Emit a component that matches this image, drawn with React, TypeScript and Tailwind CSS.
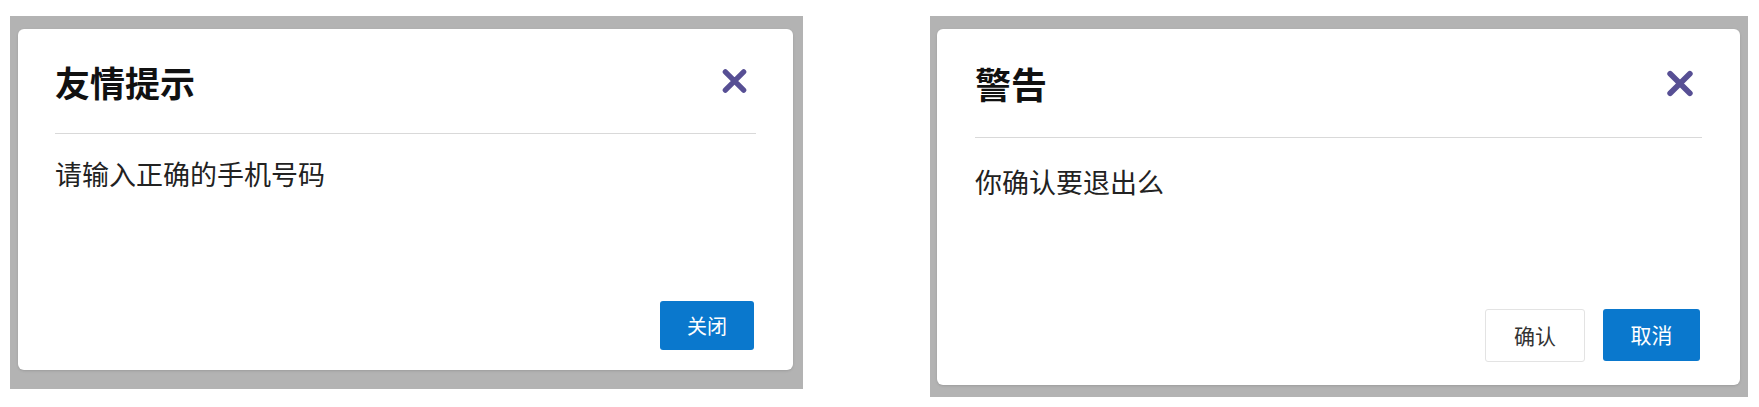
import React from 'react';

const CloseIcon: React.FC<{ className?: string }> = ({ className }) => (
  <svg viewBox="0 0 28 28" className={className} fill="none">
    <path d="M4.5 4.5 L23.5 23.5 M23.5 4.5 L4.5 23.5" stroke="#574f94" strokeWidth="5.5" strokeLinecap="round" />
  </svg>
);

const App: React.FC = () => {
  return (
    <div className="w-[1759px] h-[407px] bg-white flex items-start pt-4 pl-[10px] gap-[127px] font-['Noto_Sans_CJK_SC','Noto_Sans',sans-serif]">
      {/* 友情提示 */}
      <div className="w-[793px] h-[373px] bg-[#b3b3b3] pt-[13px] pl-2 pr-[10px] pb-[19px]">
        <div className="h-full bg-white rounded-md shadow-sm flex flex-col px-[37px] pb-5">
          <div className="h-[105px] flex items-center justify-between border-b border-[#d9d9d9]">
            <h2 className="text-[35px] leading-none font-bold text-[#111]">友情提示</h2>
            <CloseIcon className="w-[27px] h-[28px] mr-2" />
          </div>
          <p className="pt-5 text-[27px] leading-[1.5] text-[#222]">请输入正确的手机号码</p>
          <div className="mt-auto flex justify-end">
            <button className="w-[94px] h-[49px] rounded-[3px] bg-[#0a78cd] text-white text-[20px] mr-[2px]">关闭</button>
          </div>
        </div>
      </div>

      {/* 警告 */}
      <div className="w-[818px] h-[381px] bg-[#b3b3b3] pt-[13px] pl-[7px] pr-2 pb-3">
        <div className="h-full bg-white rounded-md shadow-sm flex flex-col px-[38px] pb-[23px]">
          <div className="h-[109px] flex items-center justify-between border-b border-[#d9d9d9]">
            <h2 className="text-[36px] leading-none font-bold text-[#111]">警告</h2>
            <CloseIcon className="w-[30px] h-[29px] mr-[7px]" />
          </div>
          <p className="pt-6 text-[27px] leading-[1.5] text-[#222]">你确认要退出么</p>
          <div className="mt-auto flex justify-end gap-[18px] mr-[2px]">
            <button className="w-[100px] h-[53px] rounded-[3px] bg-white border border-[#e3e3e3] text-[#333] text-[21px]">确认</button>
            <button className="w-[97px] h-[52px] rounded-[3px] bg-[#0a78cd] text-white text-[21px]">取消</button>
          </div>
        </div>
      </div>
    </div>
  );
};

export default App;
